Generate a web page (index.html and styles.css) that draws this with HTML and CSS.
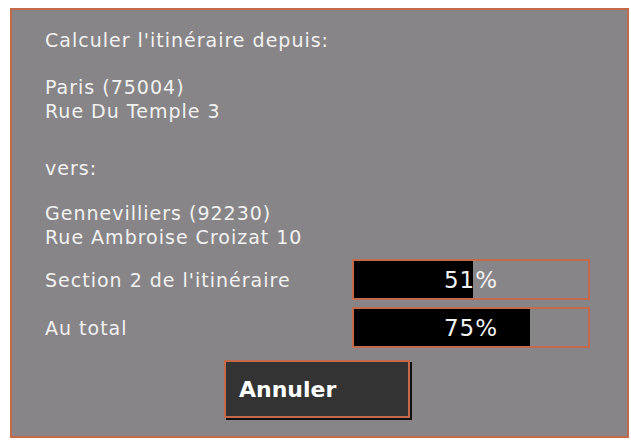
FILE: index.html
```html
<!DOCTYPE html>
<html lang="fr">
<head>
  <meta charset="UTF-8">
  <title>Calcul de l'itinéraire</title>
  <link rel="stylesheet" href="styles.css">
</head>
<body>
  <div class="dialog">
    <p class="line">Calculer l'itinéraire depuis:</p>

    <div class="address from">
      <p class="line">Paris (75004)</p>
      <p class="line">Rue Du Temple 3</p>
    </div>

    <p class="line vers">vers:</p>

    <div class="address to">
      <p class="line">Gennevilliers (92230)</p>
      <p class="line">Rue Ambroise Croizat 10</p>
    </div>

    <div class="progress-row first">
      <span class="line">Section 2 de l'itinéraire</span>
      <div class="bar">
        <div class="fill" style="width: 51%"></div>
        <span class="pct">51%</span>
      </div>
    </div>

    <div class="progress-row">
      <span class="line">Au total</span>
      <div class="bar">
        <div class="fill" style="width: 75%"></div>
        <span class="pct">75%</span>
      </div>
    </div>

    <div class="actions">
      <button class="cancel-btn">Annuler</button>
    </div>
  </div>
</body>
</html>
```

FILE: styles.css
```css
body {
  margin: 0;
  padding: 8px 2px 2px 10px;
  background: #ffffff;
  font-family: 'DejaVu Sans', sans-serif;
}

.dialog {
  box-sizing: border-box;
  width: 619px;
  height: 430px;
  background: #878587;
  border: 2px solid #c46a4c;
  padding: 18px 36px 0 33px;
  color: #f2f2f2;
}

.line {
  margin: 0;
  font-size: 19px;
  letter-spacing: 1px;
  line-height: 24px;
  white-space: nowrap;
}

.address {
  margin-top: 23px;
}

.vers {
  margin-top: 33px;
}

.address.to {
  margin-top: 21px;
}

.progress-row {
  display: grid;
  grid-template-columns: 307px 238px;
  align-items: center;
  margin-top: 7px;
}

.progress-row.first {
  margin-top: 10px;
}

.bar {
  position: relative;
  box-sizing: border-box;
  height: 41px;
  border: 2px solid #c46a4c;
  background: #878587;
}

.fill {
  height: 100%;
  background: #000000;
}

.pct {
  position: absolute;
  left: 0;
  right: 0;
  top: 0;
  bottom: 0;
  display: flex;
  align-items: center;
  justify-content: center;
  font-size: 23px;
  letter-spacing: 1px;
  color: #f2f2f2;
}

.actions {
  display: flex;
  justify-content: center;
  margin-top: 12px;
}

.cancel-btn {
  box-sizing: border-box;
  width: 186px;
  height: 58px;
  background: #333333;
  border: 2px solid #c46a4c;
  box-shadow: 2px 2px 0 #111111;
  color: #ffffff;
  font-family: 'DejaVu Sans', sans-serif;
  font-weight: bold;
  font-size: 22px;
  text-align: left;
  padding: 0 0 0 13px;
  margin-left: -2px;
}
```
